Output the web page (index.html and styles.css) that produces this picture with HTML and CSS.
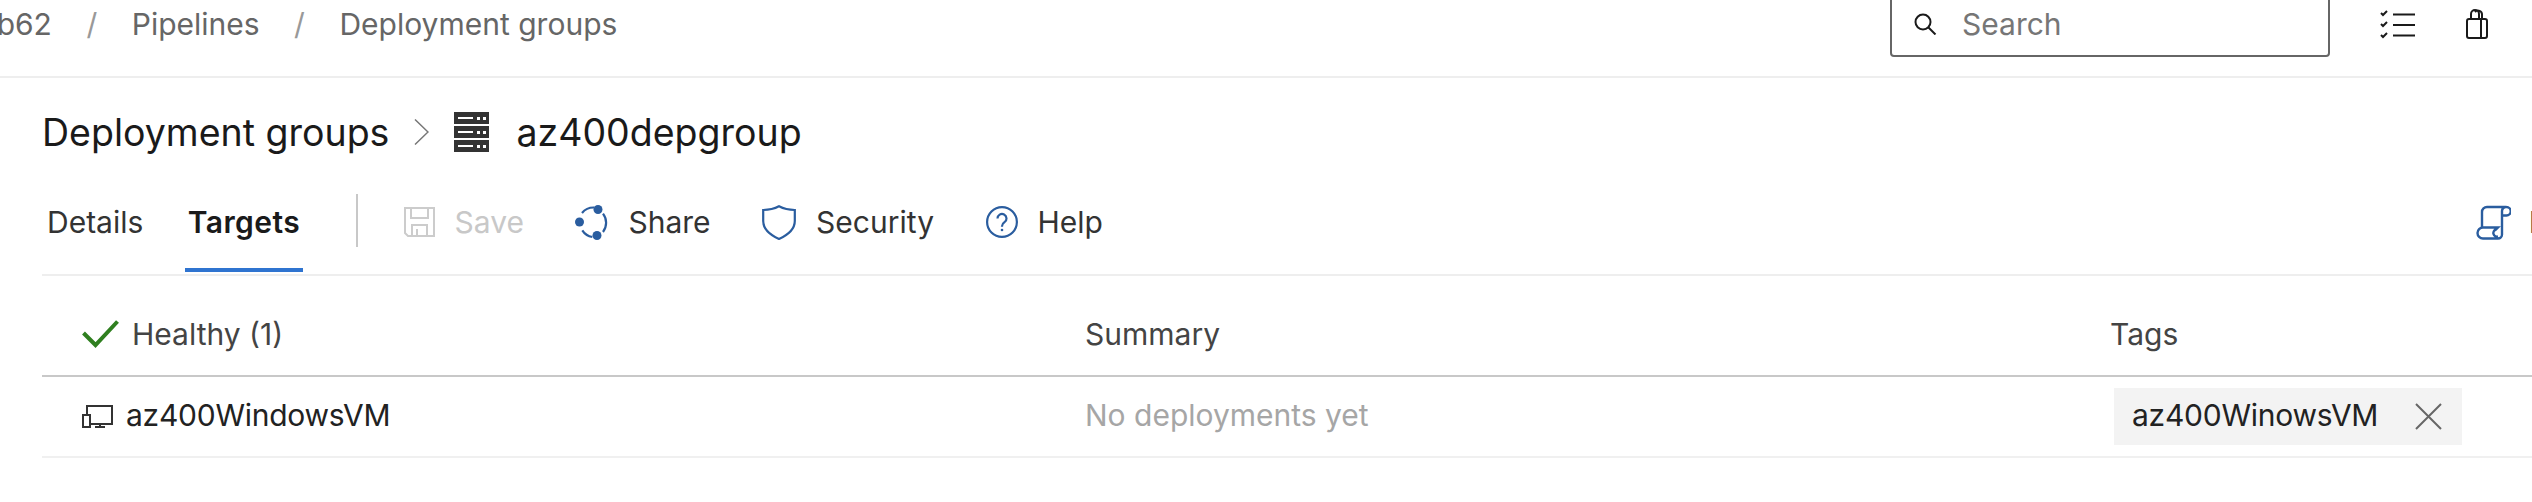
FILE: index.html
```html
<!DOCTYPE html>
<html lang="en">
<head>
    <meta charset="UTF-8">
    <title>Deployment groups</title>
    <link rel="stylesheet" href="styles.css">
</head>
<body>
    <!-- Top bar -->
    <div class="topbar">
        <div class="crumbs">
            <span>az400b62</span>
            <span class="crumb-sep">/</span>
            <span>Pipelines</span>
            <span class="crumb-sep">/</span>
            <span>Deployment groups</span>
        </div>
        <div class="search">
            <svg width="23" height="22" viewBox="0 0 23 22" fill="none" stroke="#1a1a1a" stroke-width="2"><circle cx="9" cy="9" r="7.5"/><path d="M14.5 14.5l7 7"/></svg>
            <span>Search</span>
        </div>
        <svg class="icon-list" width="35" height="29" viewBox="0 0 35 29" fill="none" stroke="#1a1a1a" stroke-width="2"><path d="M1 3l2 2 4-4M1 14l2 2 4-4M1 25l2 2 4-4"/><path d="M13 4.500h22M13 15h22M13 25.500h22"/></svg>
        <svg class="icon-bag" width="22" height="30" viewBox="0 0 22 30" fill="none" stroke="#1a1a1a" stroke-width="2"><rect x="1" y="10" width="20" height="19" rx="2"/><path d="M15 10v18M5 10V5a4 4 0 0 1 8 0v5M9 3a4 4 0 0 1 7 3v4"/></svg>
    </div>

    <!-- Title -->
    <div class="title">
        <span>Deployment groups</span>
        <svg class="title-chevron" width="15" height="26" viewBox="0 0 15 26" fill="none" stroke="#777" stroke-width="1.500"><path d="M1 0.500L14 13 1 25.500"/></svg>
        <svg class="title-server" width="35" height="40" viewBox="0 0 35 40">
            <g fill="#333"><rect width="35" height="12"/><rect y="14" width="35" height="12"/><rect y="28" width="35" height="12"/></g>
            <g fill="#fff"><rect x="4" y="5" width="15" height="2"/><rect x="23" y="5" width="3" height="3"/><rect x="29" y="5" width="3" height="3"/><rect x="4" y="19" width="15" height="2"/><rect x="23" y="19" width="3" height="3"/><rect x="29" y="19" width="3" height="3"/><rect x="4" y="33" width="15" height="2"/><rect x="23" y="33" width="3" height="3"/><rect x="29" y="33" width="3" height="3"/></g>
        </svg>
        <span>az400depgroup</span>
    </div>

    <!-- Tabs and toolbar -->
    <div class="tabs">
        <div class="tab">Details</div>
        <div class="tab tab-active">Targets</div>
        <div class="tabs-divider"></div>
        <div class="toolbar">
            <div class="tool tool-disabled">
                <svg width="31" height="30" viewBox="0 0 31 30" fill="none" stroke="#ccc" stroke-width="2"><path d="M1 1h29v28H4l-3-3z"/><path d="M7 1v10h17V1M8 29V18h15v11M13 22v7"/></svg>
                <span>Save</span>
            </div>
            <div class="tool">
                <svg width="33" height="35" viewBox="0 0 33 35" fill="none" stroke="#2a5d9f" stroke-width="2.200"><path d="M7 8A15 15 0 0 1 19 2.500M28 8.700A15 15 0 0 1 28 27M7.300 25.300A15 15 0 0 0 17.300 32"/><g fill="#2a5d9f" stroke="none"><circle cx="23" cy="4.500" r="4.500"/><circle cx="4.500" cy="17" r="4.500"/><circle cx="22" cy="30.500" r="4.500"/></g></svg>
                <span>Share</span>
            </div>
            <div class="tool">
                <svg width="34" height="35" viewBox="0 0 34 35" fill="none" stroke="#2a5d9f" stroke-width="2.200"><path d="M17 1.300C12 4 7 5 1.200 5v11c0 8 7 14 15.800 18 8.800-4 15.800-10 15.800-18V5C27 5 22 4 17 1.300z"/></svg>
                <span>Security</span>
            </div>
            <div class="tool">
                <svg width="32" height="32" viewBox="0 0 32 32" fill="none" stroke="#2a5d9f" stroke-width="2.200"><circle cx="16" cy="16" r="14.900"/><path d="M11.500 12.500a4.500 4.500 0 1 1 7 3.700c-1.700 1.100-2.500 2-2.500 4v.5"/><circle cx="16" cy="24" r="1.300" fill="#2a5d9f" stroke="none"/></svg>
                <span>Help</span>
            </div>
            <div class="tool tool-right">
                <svg width="35" height="35" viewBox="-1 -0.500 35 35" fill="none" stroke="#2a5d9f" stroke-width="2.400"><path d="M5 23V6.500a5 5 0 0 1 5-5h19.500a4 4 0 0 1 0 8.500H25M25 5.500a4 4 0 0 1 4.500-4M25 5v24a4 4 0 0 1-4 4H6a5.500 5.500 0 0 1 0-11h15l-2 2a3.500 3.500 0 0 0 2 7"/></svg>
                <span>Logs</span>
            </div>
        </div>
    </div>

    <!-- Targets table -->
    <div class="targets">
        <div class="targets-row targets-head">
            <div class="cell cell-name">
                <svg width="37" height="28" viewBox="0 0 37 28" fill="none" stroke="#2f7f1f" stroke-width="4"><path d="M1.500 13l12 12L35.500 1.500"/></svg>
                <span>Healthy (1)</span>
            </div>
            <div class="cell">Summary</div>
            <div class="cell">Tags</div>
        </div>
        <div class="targets-row">
            <div class="cell cell-name cell-target">
                <svg width="31" height="23" viewBox="0 0 31 23" fill="none" stroke="#333" stroke-width="2"><path d="M5 9V1h25v18H8"/><rect x="1" y="10" width="7" height="12"/><path d="M18 19v3M13 22h10"/></svg>
                <span>az400WindowsVM</span>
            </div>
            <div class="cell cell-muted">No deployments yet</div>
            <div class="cell">
                <div class="tag">
                    <span>az400WinowsVM</span>
                    <svg width="27" height="27" viewBox="0 0 27 27" fill="none" stroke="#666" stroke-width="2"><path d="M1 1l25 25M26 1L1 26"/></svg>
                </div>
            </div>
        </div>
    </div>
</body>
</html>
```

FILE: styles.css
```css
html, body {
    margin: 0;
    width: 2532px;
    height: 502px;
    overflow: hidden;
    background-color: #fff;
}
body {
    font-family: Inter, "Liberation Sans", sans-serif;
    font-size: 30px;
    color: #333;
}
svg {
    flex: none;
    display: block;
}
.topbar {
    display: flex;
    box-sizing: border-box;
    height: 87px;
    margin-top: -9px;
    padding-bottom: 19px;
    border-bottom: 2px solid #eee;
    color: #666;
}
.crumbs {
    display: flex;
    align-items: center;
    gap: 34.500px;
    margin-left: -94px;
    white-space: nowrap;
}
.crumb-sep {
    color: #999;
}
.search {
    display: flex;
    align-items: center;
    gap: 25px;
    box-sizing: border-box;
    width: 440px;
    margin-left: auto;
    padding-left: 22px;
    border: 2px solid #666;
    border-radius: 4px;
    color: #767676;
}
.icon-list {
    align-self: center;
    margin-left: 50px;
}
.icon-bag {
    align-self: center;
    margin-left: 51px;
    margin-right: 44px;
}
.title {
    display: flex;
    align-items: center;
    box-sizing: border-box;
    height: 104px;
    padding: 32px 0 28px 42px;
    font-size: 37.500px;
    color: #1a1a1a;
    white-space: nowrap;
}
.title-chevron {
    margin-left: 25px;
}
.title-server {
    margin-left: 25px;
    margin-right: 27px;
}
.tabs {
    display: flex;
    height: 92px;
    margin-left: 24px;
    padding-left: 20px;
}
.tab {
    display: flex;
    align-items: center;
    box-sizing: border-box;
    height: 90px;
    margin-right: 39px;
    padding: 0 3px 6px;
    border-bottom: 4px solid transparent;
}
.tab-active {
    margin-right: 53px;
    padding: 0 2.500px 6px;
    border-bottom-color: #2f74d0;
    font-weight: 600;
    letter-spacing: 0.400px;
    color: #1a1a1a;
}
.tabs-divider {
    width: 2px;
    height: 53px;
    margin-top: 12px;
    background-color: #c8c8c8;
}
.toolbar {
    display: flex;
    flex: 1;
    align-items: center;
    gap: 51.500px;
    min-width: 0;
    margin-left: 46px;
    padding-bottom: 12px;
}
.tool {
    display: flex;
    align-items: center;
    gap: 20px;
    white-space: nowrap;
}
.tool-disabled {
    color: #c8c8c8;
}
.tool-right {
    margin-left: auto;
    margin-right: -66px;
    gap: 18px;
}
.targets {
    margin-left: 42px;
    border-top: 2px solid #eee;
    margin-top: 0;
}
.targets-row {
    display: grid;
    grid-template-columns: 1043px 1025px 1fr;
    align-items: center;
    box-sizing: border-box;
    height: 81px;
    padding: 11px 0;
    border-bottom: 2px solid #f0f0f0;
    color: #222;
}
.targets-head {
    height: 101px;
    padding: 18px 0 2px;
    border-bottom-color: #c8c8c8;
    color: #444;
}
.cell-name {
    display: flex;
    align-items: center;
    gap: 13px;
    padding-left: 40px;
}
.cell-target {
    letter-spacing: -0.250px;
}
.cell-target span,
.tag span {
    padding-bottom: 3px;
}
.cell-muted {
    padding-bottom: 3px;
    color: #a6a6a6;
}
.tag {
    display: flex;
    align-items: center;
    justify-content: space-between;
    box-sizing: border-box;
    width: 348px;
    height: 57px;
    margin-left: 4px;
    padding: 0 20px 0 18px;
    background-color: #f3f3f3;
    letter-spacing: -0.250px;
    color: #222;
}
```
